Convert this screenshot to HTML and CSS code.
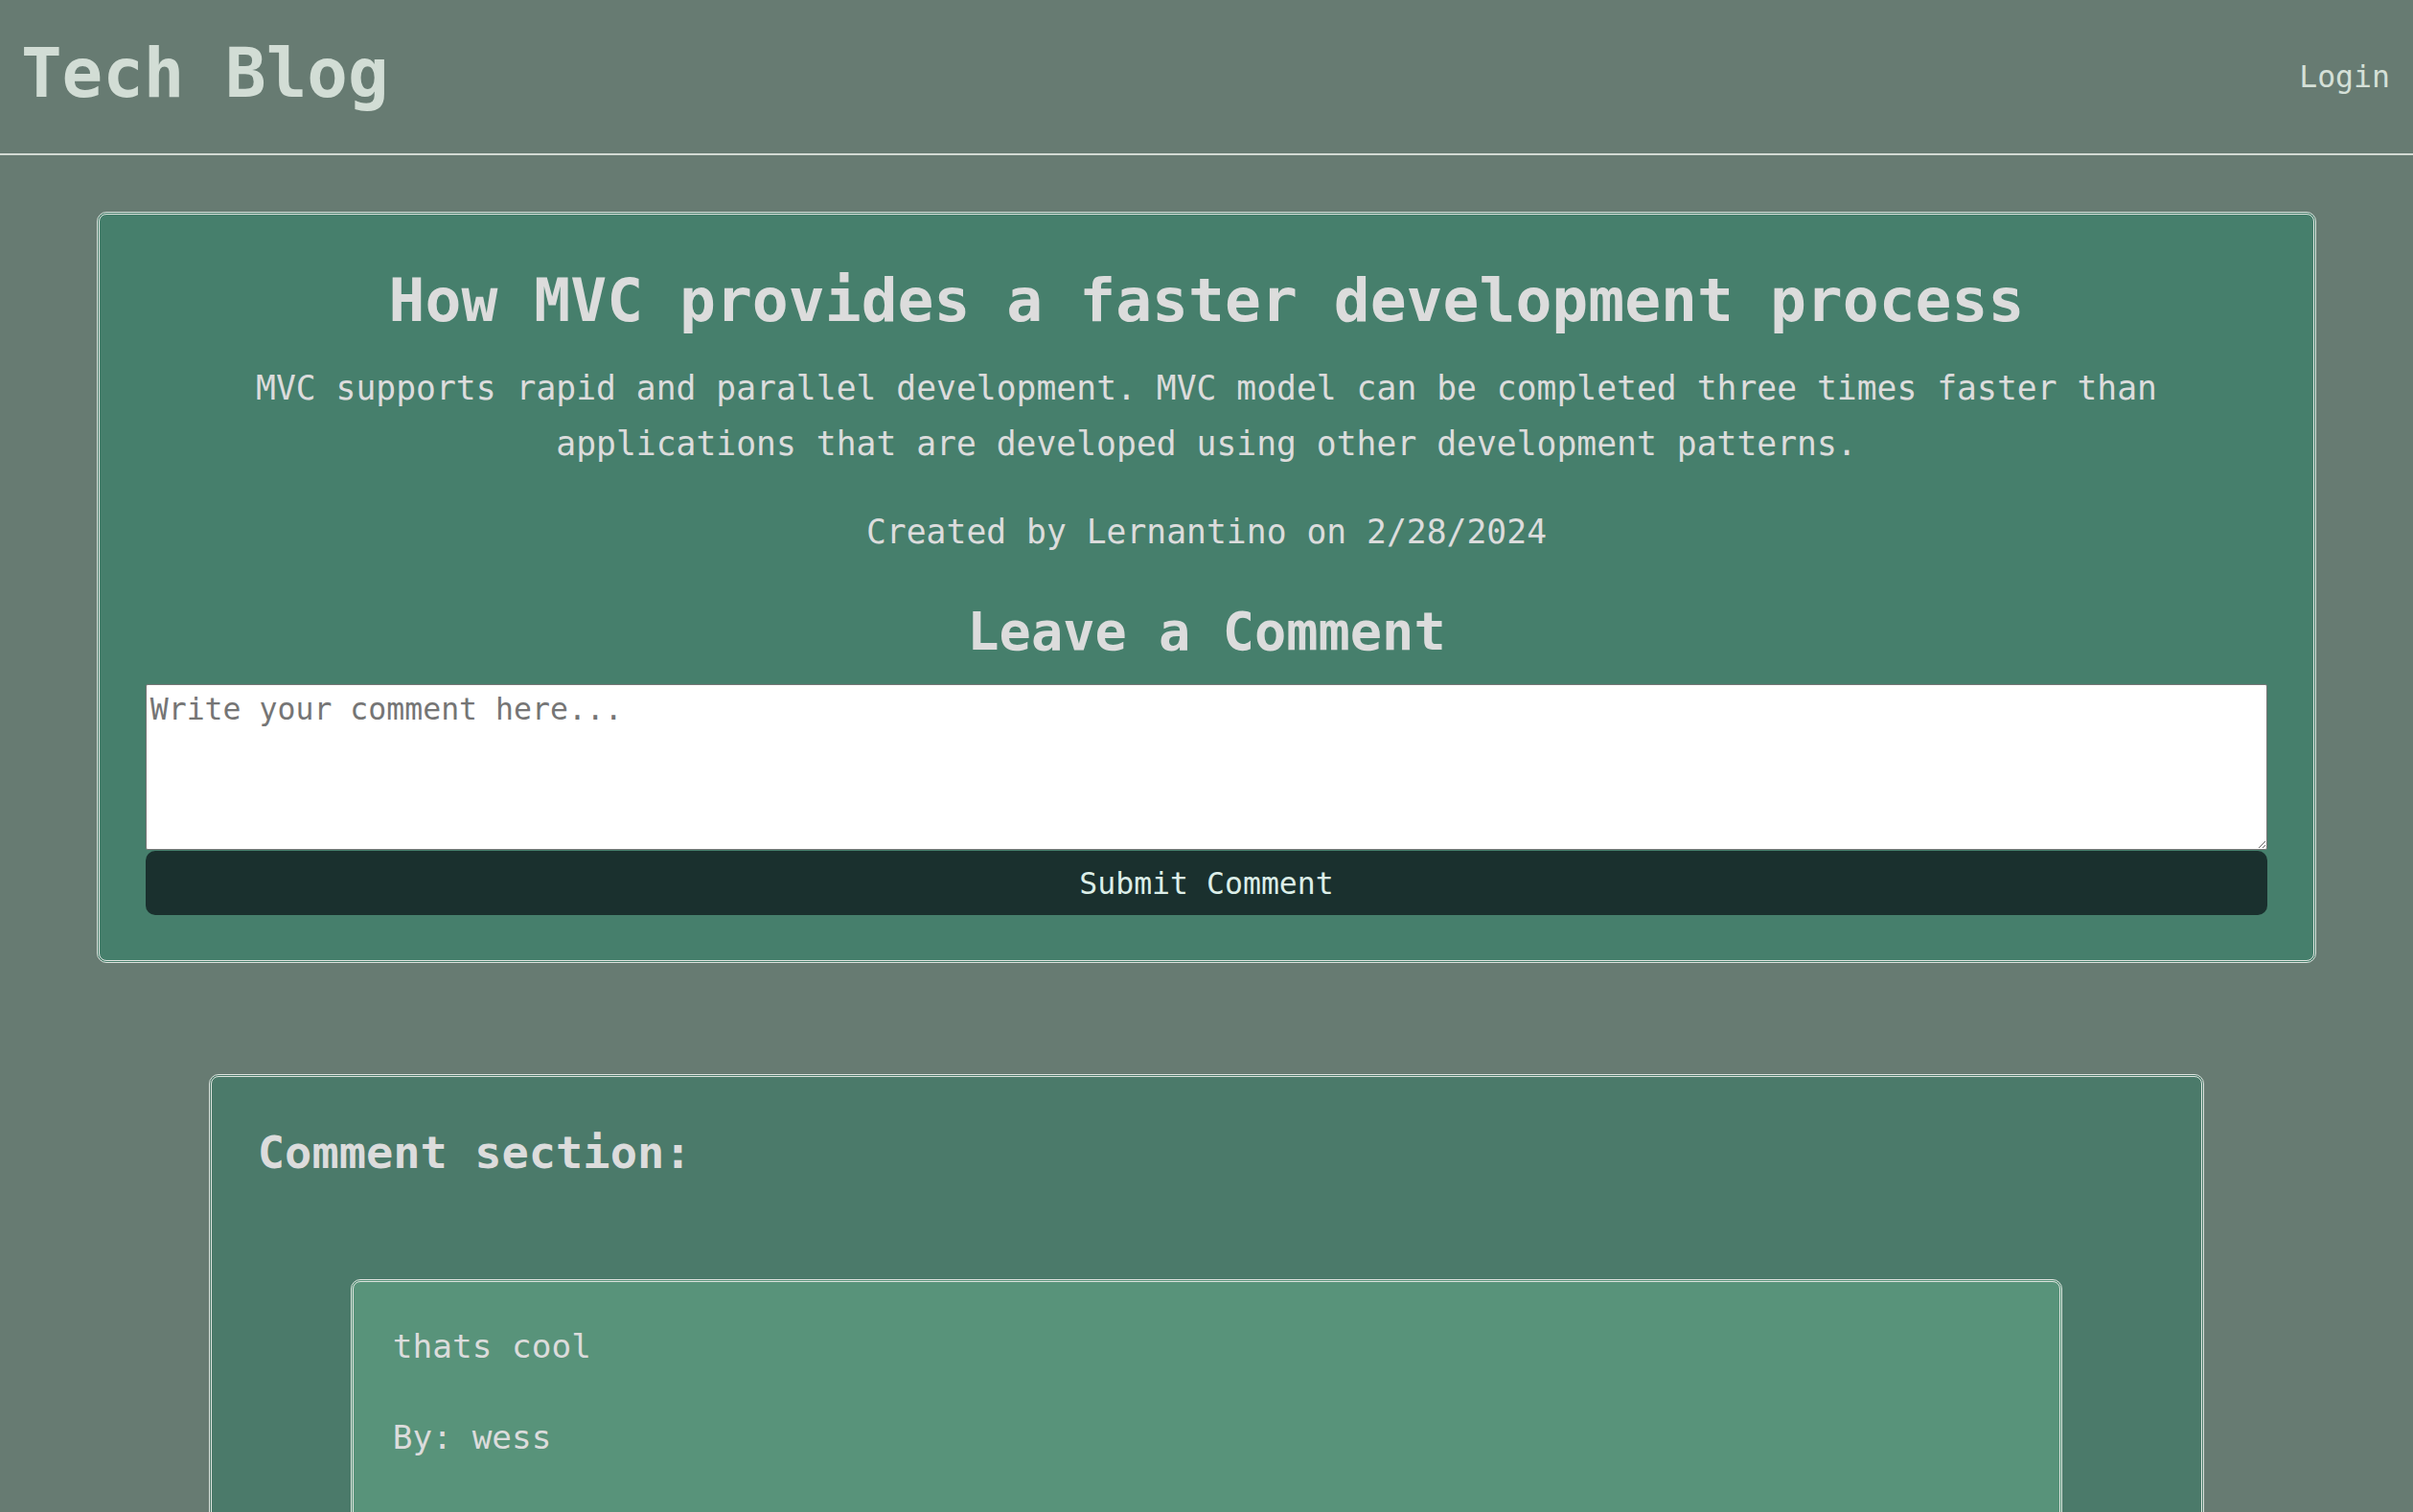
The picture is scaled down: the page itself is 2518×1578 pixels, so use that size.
FILE: index.html
```html
<!DOCTYPE html>
<html lang="en">
<head>
<meta charset="utf-8">
<title>Tech Blog</title>
<link rel="stylesheet" href="styles.css">
</head>
<body>
  <header class="site-header">
    <h1 class="brand">Tech Blog</h1>
    <nav class="nav">
      <a class="nav-link" href="#">Login</a>
    </nav>
  </header>

  <main class="page">
    <section class="post-card">
      <h2 class="post-title">How MVC provides a faster development process</h2>
      <p class="post-body">MVC supports rapid and parallel development. MVC model can be completed three times faster than applications that are developed using other development patterns.</p>
      <p class="post-meta">Created by Lernantino on 2/28/2024</p>
      <h3 class="form-title">Leave a Comment</h3>
      <form class="comment-form">
        <textarea class="comment-input" placeholder="Write your comment here..."></textarea>
        <button class="comment-submit" type="button">Submit Comment</button>
      </form>
    </section>

    <section class="comments-card">
      <h3 class="comments-title">Comment section:</h3>
      <div class="comment">
        <p class="comment-text">thats cool</p>
        <p class="comment-author">By: wess</p>
      </div>
    </section>
  </main>
</body>
</html>
```

FILE: styles.css
```css
* {
  box-sizing: border-box;
}

html, body {
  margin: 0;
  padding: 0;
}

body {
  background: #677b72;
  font-family: "DejaVu Sans Mono", "Liberation Mono", monospace;
  color: #dcdcdc;
}

/* Header */
.site-header {
  display: flex;
  justify-content: space-between;
  align-items: flex-start;
  height: 162px;
  padding: 27px 24px 0 22px;
  border-bottom: 2px solid #d3dad4;
}

.brand {
  margin: 0;
  font-size: 70.8px;
  line-height: 100px;
  font-weight: bold;
  color: #d2ddd5;
}

.nav {
  margin-top: 33px;
}

.nav-link {
  display: block;
  font-size: 31.5px;
  line-height: 40px;
  color: #d5e0d8;
  text-decoration: none;
}

/* Post card */
.page {
  padding-bottom: 40px;
}

.post-card {
  width: 92%;
  margin: 59px auto 0;
  padding: 50px 48px 47px;
  background: #467f6c;
  border: 3px double #dde3de;
  border-radius: 10px;
  text-align: center;
}

.post-title {
  margin: 0;
  font-size: 63px;
  line-height: 80px;
  font-weight: bold;
  color: #dcdcdc;
}

.post-body {
  margin: 22px 0 0;
  font-size: 34.7px;
  line-height: 58px;
}

.post-meta {
  margin: 34px 0 0;
  font-size: 34.7px;
  line-height: 58px;
}

.form-title {
  margin: 40px 0 0;
  font-size: 55.3px;
  line-height: 70px;
  font-weight: bold;
}

.comment-form {
  margin-top: 20px;
}

.comment-input {
  display: block;
  width: 100%;
  height: 173px;
  margin: 0 0 1px;
  padding: 7px 4px 2px;
  font-family: "DejaVu Sans Mono", "Liberation Mono", monospace;
  font-size: 31.5px;
  background: #ffffff;
  border: 1px solid #767676;
  border-radius: 2px;
}

.comment-input::placeholder {
  color: #757575;
}

.comment-submit {
  display: block;
  width: 100%;
  height: 67px;
  padding: 0;
  border: none;
  border-radius: 10px;
  background: #1a302e;
  color: #dceee8;
  font-family: "DejaVu Sans Mono", "Liberation Mono", monospace;
  font-size: 31.5px;
}

/* Comments */
.comments-card {
  width: 82.7%;
  margin: 116px auto 0;
  padding: 49px 48px 0;
  background: #4b7a6a;
  border: 3px double #dde3de;
  border-radius: 10px;
}

.comments-title {
  margin: 0;
  font-size: 47px;
  line-height: 60px;
  font-weight: bold;
}

.comment {
  width: 90.2%;
  margin: 102px auto 60px;
  padding: 38px 41px 60px;
  background: #58937a;
  border: 3px double #dde3de;
  border-radius: 10px;
}

.comment-text,
.comment-author {
  margin: 0;
  font-size: 34.4px;
  line-height: 58px;
}

.comment-author {
  margin-top: 37px;
}
```
